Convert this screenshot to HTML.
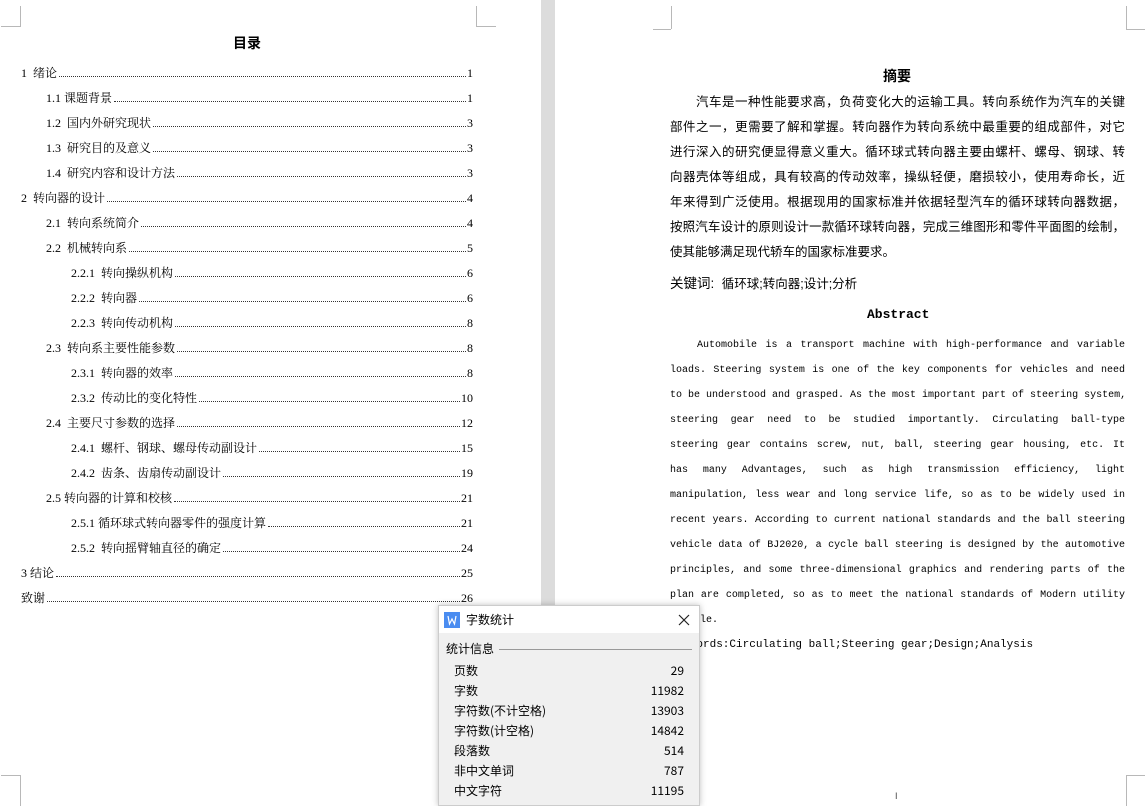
<!DOCTYPE html>
<html><head><meta charset="utf-8"><style>
*{margin:0;padding:0;box-sizing:border-box}
body{width:1145px;height:806px;overflow:hidden;background:#fff;position:relative;font-family:"Liberation Sans","Noto Sans CJK SC",sans-serif;color:#000}
.gut{position:absolute;left:541px;top:0;width:14px;height:806px;background:#dcdcdc}
.m{position:absolute;background:#b8b8b8}
.toc{position:absolute;height:20px;font-size:12px;display:flex;align-items:flex-end;line-height:14px;font-family:"Liberation Serif","Noto Serif CJK SC",serif}
.toc .t{white-space:nowrap}
.toc .d{flex:1;border-bottom:1px dotted #333;margin:0 1px 3px 2px}
.toc .p{white-space:nowrap}
h1{position:absolute;font-size:14px;font-weight:bold}
.cn{position:absolute;left:670px;width:455px;font-size:12.5px;line-height:25px;text-align:justify;text-align-last:justify;font-family:"Liberation Sans","Noto Sans CJK SC",sans-serif}
.en{position:absolute;left:670px;width:455px;font-family:"Liberation Mono",monospace;font-size:10px;line-height:25px;text-align:justify;text-align-last:justify}
.en div{white-space:nowrap;overflow:visible}
.dlg{position:absolute;left:438px;top:605px;width:262px;height:201px;background:#f0f0f0;border:1px solid #ccc;box-shadow:0 0 6px rgba(0,0,0,.25)}
.dt{height:27px;background:#fff;display:flex;align-items:center;font-size:12px}
.row{position:absolute;left:15px;width:230px;font-size:12px;line-height:16px;display:flex;justify-content:space-between;font-family:"Noto Sans CJK SC",sans-serif}
</style></head><body>
<div class="gut"></div>
<div class="m" style="left:20px;top:6px;width:1px;height:21px"></div>
<div class="m" style="left:1px;top:26px;width:20px;height:1px"></div>
<div class="m" style="left:476px;top:6px;width:1px;height:21px"></div>
<div class="m" style="left:476px;top:26px;width:20px;height:1px"></div>
<div class="m" style="left:20px;top:775px;width:1px;height:31px"></div>
<div class="m" style="left:1px;top:775px;width:20px;height:1px"></div>
<div class="m" style="left:671px;top:6px;width:1px;height:23px"></div>
<div class="m" style="left:653px;top:29px;width:18px;height:1px"></div>
<div class="m" style="left:1126px;top:6px;width:1px;height:23px"></div>
<div class="m" style="left:1126px;top:29px;width:19px;height:1px"></div>
<div class="m" style="left:671px;top:775px;width:1px;height:31px"></div>
<div class="m" style="left:653px;top:775px;width:18px;height:1px"></div>
<div class="m" style="left:1126px;top:775px;width:1px;height:31px"></div>
<div class="m" style="left:1126px;top:775px;width:19px;height:1px"></div>

<h1 style="left:233px;top:33px">目录</h1>
<div class="toc" style="left:21px;width:452px;top:60px"><span class="t">1&nbsp; 绪论</span><span class="d"></span><span class="p">1</span></div>
<div class="toc" style="left:46px;width:427px;top:85px"><span class="t">1.1 课题背景</span><span class="d"></span><span class="p">1</span></div>
<div class="toc" style="left:46px;width:427px;top:110px"><span class="t">1.2&nbsp; 国内外研究现状</span><span class="d"></span><span class="p">3</span></div>
<div class="toc" style="left:46px;width:427px;top:135px"><span class="t">1.3&nbsp; 研究目的及意义</span><span class="d"></span><span class="p">3</span></div>
<div class="toc" style="left:46px;width:427px;top:160px"><span class="t">1.4&nbsp; 研究内容和设计方法</span><span class="d"></span><span class="p">3</span></div>
<div class="toc" style="left:21px;width:452px;top:185px"><span class="t">2&nbsp; 转向器的设计</span><span class="d"></span><span class="p">4</span></div>
<div class="toc" style="left:46px;width:427px;top:210px"><span class="t">2.1&nbsp; 转向系统简介</span><span class="d"></span><span class="p">4</span></div>
<div class="toc" style="left:46px;width:427px;top:235px"><span class="t">2.2&nbsp; 机械转向系</span><span class="d"></span><span class="p">5</span></div>
<div class="toc" style="left:71px;width:402px;top:260px"><span class="t">2.2.1&nbsp; 转向操纵机构</span><span class="d"></span><span class="p">6</span></div>
<div class="toc" style="left:71px;width:402px;top:285px"><span class="t">2.2.2&nbsp; 转向器</span><span class="d"></span><span class="p">6</span></div>
<div class="toc" style="left:71px;width:402px;top:310px"><span class="t">2.2.3&nbsp; 转向传动机构</span><span class="d"></span><span class="p">8</span></div>
<div class="toc" style="left:46px;width:427px;top:335px"><span class="t">2.3&nbsp; 转向系主要性能参数</span><span class="d"></span><span class="p">8</span></div>
<div class="toc" style="left:71px;width:402px;top:360px"><span class="t">2.3.1&nbsp; 转向器的效率</span><span class="d"></span><span class="p">8</span></div>
<div class="toc" style="left:71px;width:402px;top:385px"><span class="t">2.3.2&nbsp; 传动比的变化特性</span><span class="d"></span><span class="p">10</span></div>
<div class="toc" style="left:46px;width:427px;top:410px"><span class="t">2.4&nbsp; 主要尺寸参数的选择</span><span class="d"></span><span class="p">12</span></div>
<div class="toc" style="left:71px;width:402px;top:435px"><span class="t">2.4.1&nbsp; 螺杆、钢球、螺母传动副设计</span><span class="d"></span><span class="p">15</span></div>
<div class="toc" style="left:71px;width:402px;top:460px"><span class="t">2.4.2&nbsp; 齿条、齿扇传动副设计</span><span class="d"></span><span class="p">19</span></div>
<div class="toc" style="left:46px;width:427px;top:485px"><span class="t">2.5 转向器的计算和校核</span><span class="d"></span><span class="p">21</span></div>
<div class="toc" style="left:71px;width:402px;top:510px"><span class="t">2.5.1 循环球式转向器零件的强度计算</span><span class="d"></span><span class="p">21</span></div>
<div class="toc" style="left:71px;width:402px;top:535px"><span class="t">2.5.2&nbsp; 转向摇臂轴直径的确定</span><span class="d"></span><span class="p">24</span></div>
<div class="toc" style="left:21px;width:452px;top:560px"><span class="t">3 结论</span><span class="d"></span><span class="p">25</span></div>
<div class="toc" style="left:21px;width:452px;top:585px"><span class="t">致谢</span><span class="d"></span><span class="p">26</span></div>

<h1 style="left:883px;top:66px">摘要</h1>
<div class="cn" style="top:90px">
<div style="text-indent:26px">汽车是一种性能要求高，负荷变化大的运输工具。转向系统作为汽车的关键</div>
<div>部件之一，更需要了解和掌握。转向器作为转向系统中最重要的组成部件，对它</div>
<div>进行深入的研究便显得意义重大。循环球式转向器主要由螺杆、螺母、钢球、转</div>
<div>向器壳体等组成，具有较高的传动效率，操纵轻便，磨损较小，使用寿命长，近</div>
<div>年来得到广泛使用。根据现用的国家标准并依据轻型汽车的循环球转向器数据，</div>
<div>按照汽车设计的原则设计一款循环球转向器，完成三维图形和零件平面图的绘制，</div>
<div style="text-align-last:left">使其能够满足现代轿车的国家标准要求。</div>
</div>
<div style="position:absolute;left:670px;top:272px;font-size:13.5px">关键词:&nbsp; <span style="font-size:12.5px">循环球;转向器;设计;分析</span></div>
<div style="position:absolute;left:867px;top:307px;font-size:13px;font-weight:bold;font-family:'Liberation Mono',monospace">Abstract</div>
<div class="en" style="top:333px">
<div style="text-indent:27px">Automobile is a transport machine with high-performance and variable</div>
<div>loads. Steering system is one of the key components for vehicles and need</div>
<div>to be understood and grasped. As the most important part of steering system,</div>
<div>steering gear need to be studied importantly. Circulating ball-type</div>
<div>steering gear contains screw, nut, ball, steering gear housing, etc. It</div>
<div>has many Advantages, such as high transmission efficiency, light</div>
<div>manipulation, less wear and long service life, so as to be widely used in</div>
<div>recent years. According to current national standards and the ball steering</div>
<div>vehicle data of BJ2020, a cycle ball steering is designed by the automotive</div>
<div>principles, and some three-dimensional graphics and rendering parts of the</div>
<div>plan are completed, so as to meet the national standards of Modern utility</div>
<div style="text-align-last:left">vehicle.</div>
<div style="text-align-last:left;font-size:11px">Keywords:Circulating ball;Steering gear;Design;Analysis</div>
</div>
<div style="position:absolute;left:895px;top:791px;font-size:9px;color:#444">I</div>

<div class="dlg">
<div class="dt"><svg width="16" height="16" style="margin:0 6px 0 5px"><rect width="16" height="16" fill="#4a8cf0"/><path d="M4 4 L5.5 12 L8 7 L10.5 12 L12 4" stroke="#fff" stroke-width="1.2" fill="none"/></svg><span>字数统计</span>
<svg width="12" height="12" style="margin-left:auto;margin-right:9px"><path d="M1 1L11 11M11 1L1 11" stroke="#222" stroke-width="1.2"/></svg></div>
<div style="position:absolute;left:7px;top:34px;font-size:12px">统计信息</div>
<div style="position:absolute;left:60px;top:43px;width:193px;height:1px;background:#999"></div>
<div class="row" style="top:57px"><span>页数</span><span>29</span></div>
<div class="row" style="top:77px"><span>字数</span><span>11982</span></div>
<div class="row" style="top:97px"><span>字符数(不计空格)</span><span>13903</span></div>
<div class="row" style="top:117px"><span>字符数(计空格)</span><span>14842</span></div>
<div class="row" style="top:137px"><span>段落数</span><span>514</span></div>
<div class="row" style="top:157px"><span>非中文单词</span><span>787</span></div>
<div class="row" style="top:177px"><span>中文字符</span><span>11195</span></div>
</div>
</body></html>
